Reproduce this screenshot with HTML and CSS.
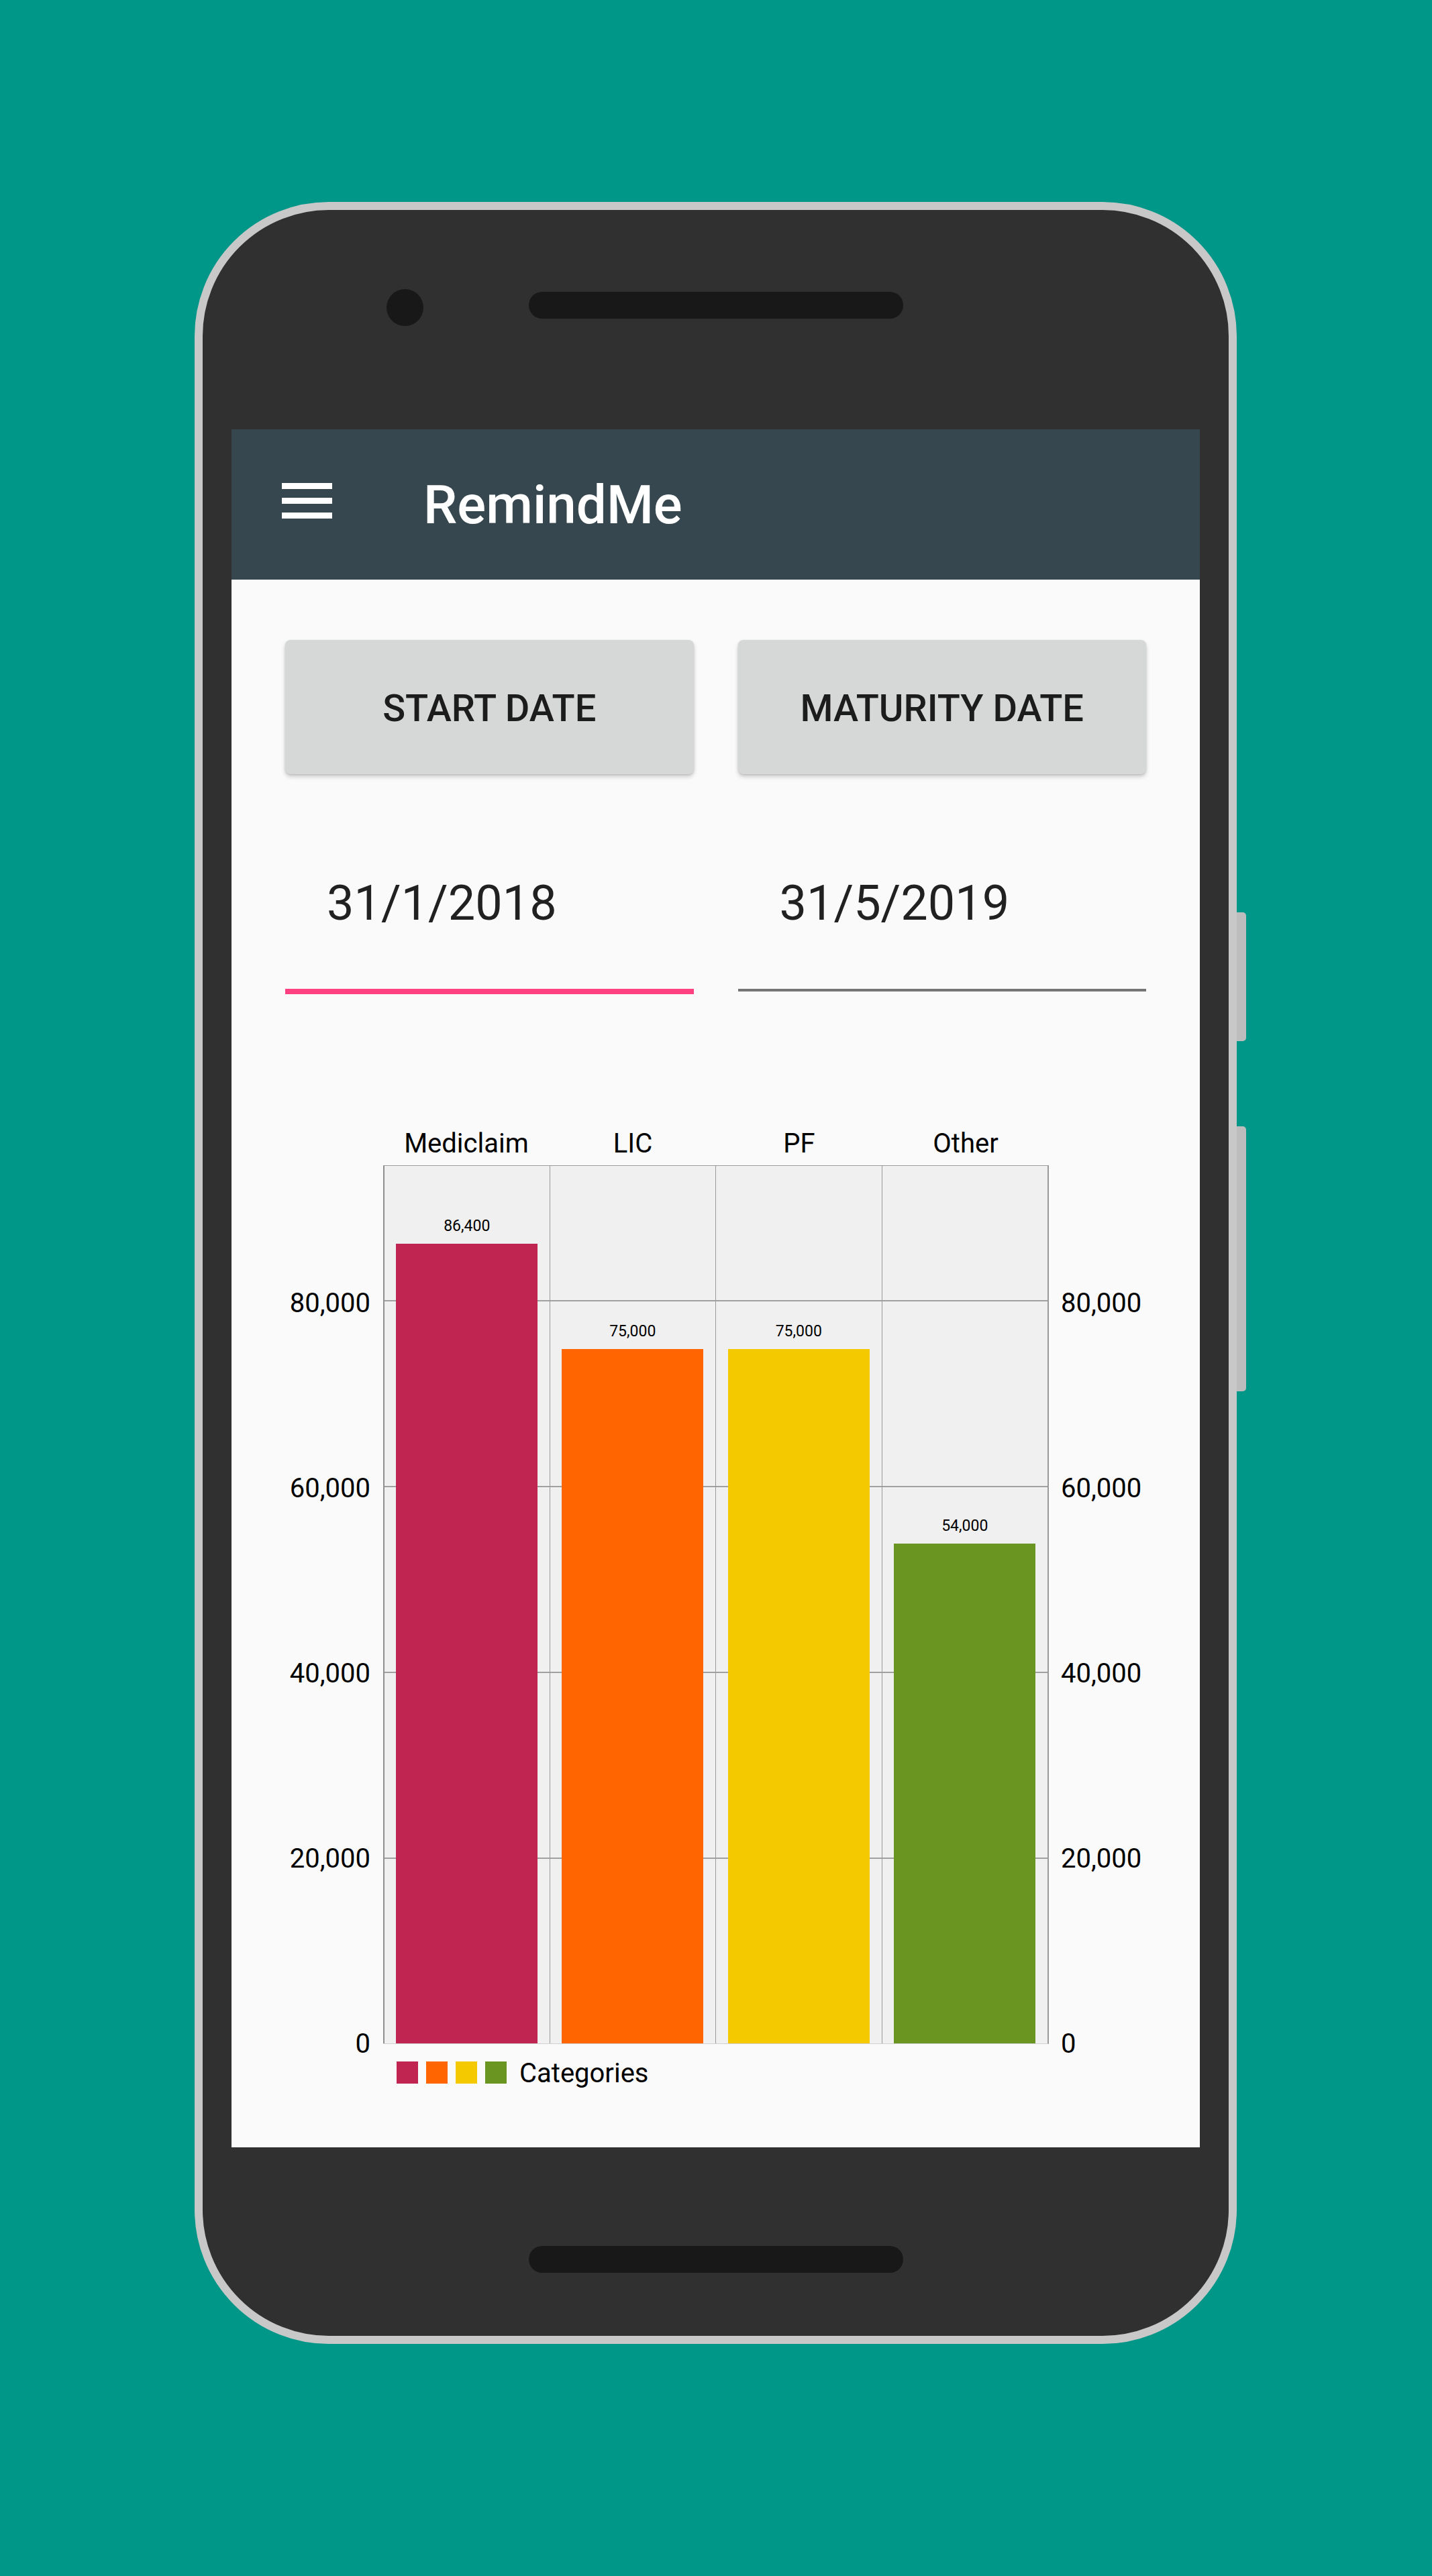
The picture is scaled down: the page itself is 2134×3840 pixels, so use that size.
FILE: index.html
```html
<!DOCTYPE html>
<html lang="en">
<head>
<meta charset="utf-8">
<title>RemindMe</title>
<link rel="stylesheet" href="styles.css">
</head>
<body>
<div class="page">
  <div class="device">
    <div class="phone">
      <div class="bezel-top">
        <span class="camera"></span>
        <span class="speaker speaker-top"></span>
      </div>
      <div class="screen">
        <header class="appbar">
          <svg class="menu" width="75" height="53" viewBox="0 0 75 53" aria-hidden="true">
            <rect x="0" y="0" width="75" height="9" fill="#ffffff"/>
            <rect x="0" y="22" width="75" height="9" fill="#ffffff"/>
            <rect x="0" y="44" width="75" height="9" fill="#ffffff"/>
          </svg>
          <h1 class="title">RemindMe</h1>
        </header>
        <main class="content">
          <div class="btn-row">
            <button class="btn">START DATE</button>
            <button class="btn">MATURITY DATE</button>
          </div>
          <div class="date-row">
            <div class="date-field focused">31/1/2018</div>
            <div class="date-field">31/5/2019</div>
          </div>
          <section class="chart">
            <div class="cat-labels">
              <span>Mediclaim</span>
              <span>LIC</span>
              <span>PF</span>
              <span>Other</span>
            </div>
            <div class="axis axis-left">
              <span>80,000</span>
              <span>60,000</span>
              <span>40,000</span>
              <span>20,000</span>
              <span>0</span>
            </div>
            <div class="plot">
              <div class="col">
                <span class="val">86,400</span>
                <div class="bar c1" style="height:1192px"></div>
              </div>
              <div class="col">
                <span class="val">75,000</span>
                <div class="bar c2" style="height:1035px"></div>
              </div>
              <div class="col">
                <span class="val">75,000</span>
                <div class="bar c3" style="height:1035px"></div>
              </div>
              <div class="col">
                <span class="val">54,000</span>
                <div class="bar c4" style="height:745px"></div>
              </div>
            </div>
            <div class="axis axis-right">
              <span>80,000</span>
              <span>60,000</span>
              <span>40,000</span>
              <span>20,000</span>
              <span>0</span>
            </div>
            <div class="legend">
              <span class="swatch c1"></span>
              <span class="swatch c2"></span>
              <span class="swatch c3"></span>
              <span class="swatch c4"></span>
              <span class="legend-text">Categories</span>
            </div>
          </section>
        </main>
      </div>
      <div class="bezel-bottom">
        <span class="speaker"></span>
      </div>
    </div>
    <div class="side-keys">
      <span class="key key-power"></span>
      <span class="key key-volume"></span>
    </div>
  </div>
</div>
</body>
</html>
```

FILE: styles.css
```css
* {
  box-sizing: border-box;
}

html, body {
  margin: 0;
  padding: 0;
}

body {
  width: 2134px;
  height: 3840px;
  background: #009688;
  font-family: Roboto, "Liberation Sans", sans-serif;
  overflow: hidden;
}

.page {
  padding-top: 301px;
  padding-left: 290px;
}

.device {
  display: flex;
  align-items: flex-start;
}

/* phone body */
.phone {
  width: 1553px;
  height: 3193px;
  border: 12px solid #c8c8c8;
  border-radius: 200px;
  background: #303030;
  display: flex;
  flex-direction: column;
  align-items: center;
}

.bezel-top {
  width: 100%;
  height: 327px;
  flex: none;
  display: flex;
  align-items: flex-start;
  padding-top: 117.5px;
  padding-left: 273.5px;
}

.camera {
  width: 55px;
  height: 55px;
  border-radius: 50%;
  background: #181818;
}

.speaker {
  width: 558px;
  height: 40px;
  border-radius: 20px;
  background: #181818;
}

.speaker-top {
  margin-left: 157.5px;
  margin-top: 4.5px;
}

.bezel-bottom {
  flex: 1;
  width: 100%;
  display: flex;
  justify-content: center;
  padding-top: 147px;
}

.side-keys {
  display: flex;
  flex-direction: column;
  gap: 127px;
  margin-top: 1059px;
}

.key {
  width: 14px;
  background: #bdbdbd;
  border-radius: 0 5px 5px 0;
}

.key-power {
  height: 192px;
}

.key-volume {
  height: 395px;
}

/* screen */
.screen {
  width: 1443px;
  height: 2561px;
  flex: none;
  background: #fafafa;
  display: flex;
  flex-direction: column;
  overflow: hidden;
}

.appbar {
  height: 224px;
  flex: none;
  background: #37474f;
  display: flex;
  align-items: flex-start;
  padding-left: 75px;
}

.menu {
  margin-top: 80px;
  display: block;
}

.title {
  margin: 65.6px 0 0 136px;
  font-family: Roboto, sans-serif;
  font-weight: 500;
  font-size: 80px;
  line-height: 94px;
  color: #ffffff;
}

.content {
  padding: 90px 80px 0;
}

.btn-row,
.date-row {
  display: grid;
  grid-template-columns: 1fr 1fr;
  column-gap: 66px;
  align-items: start;
}

.btn {
  height: 200px;
  border: none;
  border-radius: 8px;
  background: #d6d7d7;
  font-family: Roboto, sans-serif;
  font-weight: 500;
  font-size: 56px;
  color: #1c1c1c;
  padding: 4px 0 0;
  box-shadow: 0 4px 6px rgba(0, 0, 0, 0.18), 0 1px 3px rgba(0, 0, 0, 0.12);
}

.date-row {
  margin-top: 151px;
}

.date-field {
  font-family: Roboto, sans-serif;
  font-size: 72px;
  line-height: 84px;
  color: #212121;
  padding: 0 0 85px 62px;
  border-bottom: 4px solid #757575;
}

.date-field.focused {
  border-bottom: 8px solid #ff4081;
}

/* chart */
.chart {
  margin-top: 199px;
  display: grid;
  grid-template-columns: 146px 992px 1fr;
  grid-template-rows: 56px 1310px auto;
  font-family: Roboto, sans-serif;
  color: #000000;
}

.cat-labels {
  grid-column: 2;
  grid-row: 1;
  align-self: start;
  display: grid;
  grid-template-columns: repeat(4, 1fr);
  font-size: 40px;
  line-height: 47px;
  text-align: center;
}

.axis {
  grid-row: 2;
  height: 1310px;
  display: flex;
  flex-direction: column;
  padding-top: 181.5px;
  gap: 229px;
  font-size: 40px;
  line-height: 47px;
  white-space: nowrap;
}

.axis span {
  height: 47px;
  flex: none;
}

.axis-left {
  grid-column: 1;
  align-items: flex-end;
  padding-right: 19px;
}

.axis-right {
  grid-column: 3;
  align-items: flex-start;
  padding-left: 18px;
}

.plot {
  grid-column: 2;
  grid-row: 2;
  height: 1310px;
  display: grid;
  grid-template-columns: repeat(4, 1fr);
  border-top: 1px solid #9a9a9a;
  border-right: 2px solid #9a9a9a;
  border-bottom: 1px solid #cfcfcf;
  background-color: #f0f0f0;
  background-image: repeating-linear-gradient(to top, transparent 0, transparent 275px, #a0a0a0 275px, #a0a0a0 277px);
}

.col {
  display: flex;
  flex-direction: column;
  justify-content: flex-end;
  align-items: center;
  border-left: 1px solid #9a9a9a;
}

.col:first-child {
  border-left: 2px solid #8f8f8f;
}

.val {
  font-size: 23px;
  line-height: 27px;
  margin-bottom: 13px;
}

.bar {
  width: 211px;
}

.c1 { background: #c02551; }
.c2 { background: #ff6501; }
.c3 { background: #f5c900; }
.c4 { background: #6a9520; }

.legend {
  grid-column: 2 / 4;
  grid-row: 3;
  margin-top: 20px;
  padding-left: 20px;
  display: flex;
  align-items: flex-start;
  gap: 12px;
  font-size: 40px;
  line-height: 47px;
}

.swatch {
  width: 32px;
  height: 33px;
  margin-top: 6px;
}

.legend-text {
  margin-left: 7px;
}
```
